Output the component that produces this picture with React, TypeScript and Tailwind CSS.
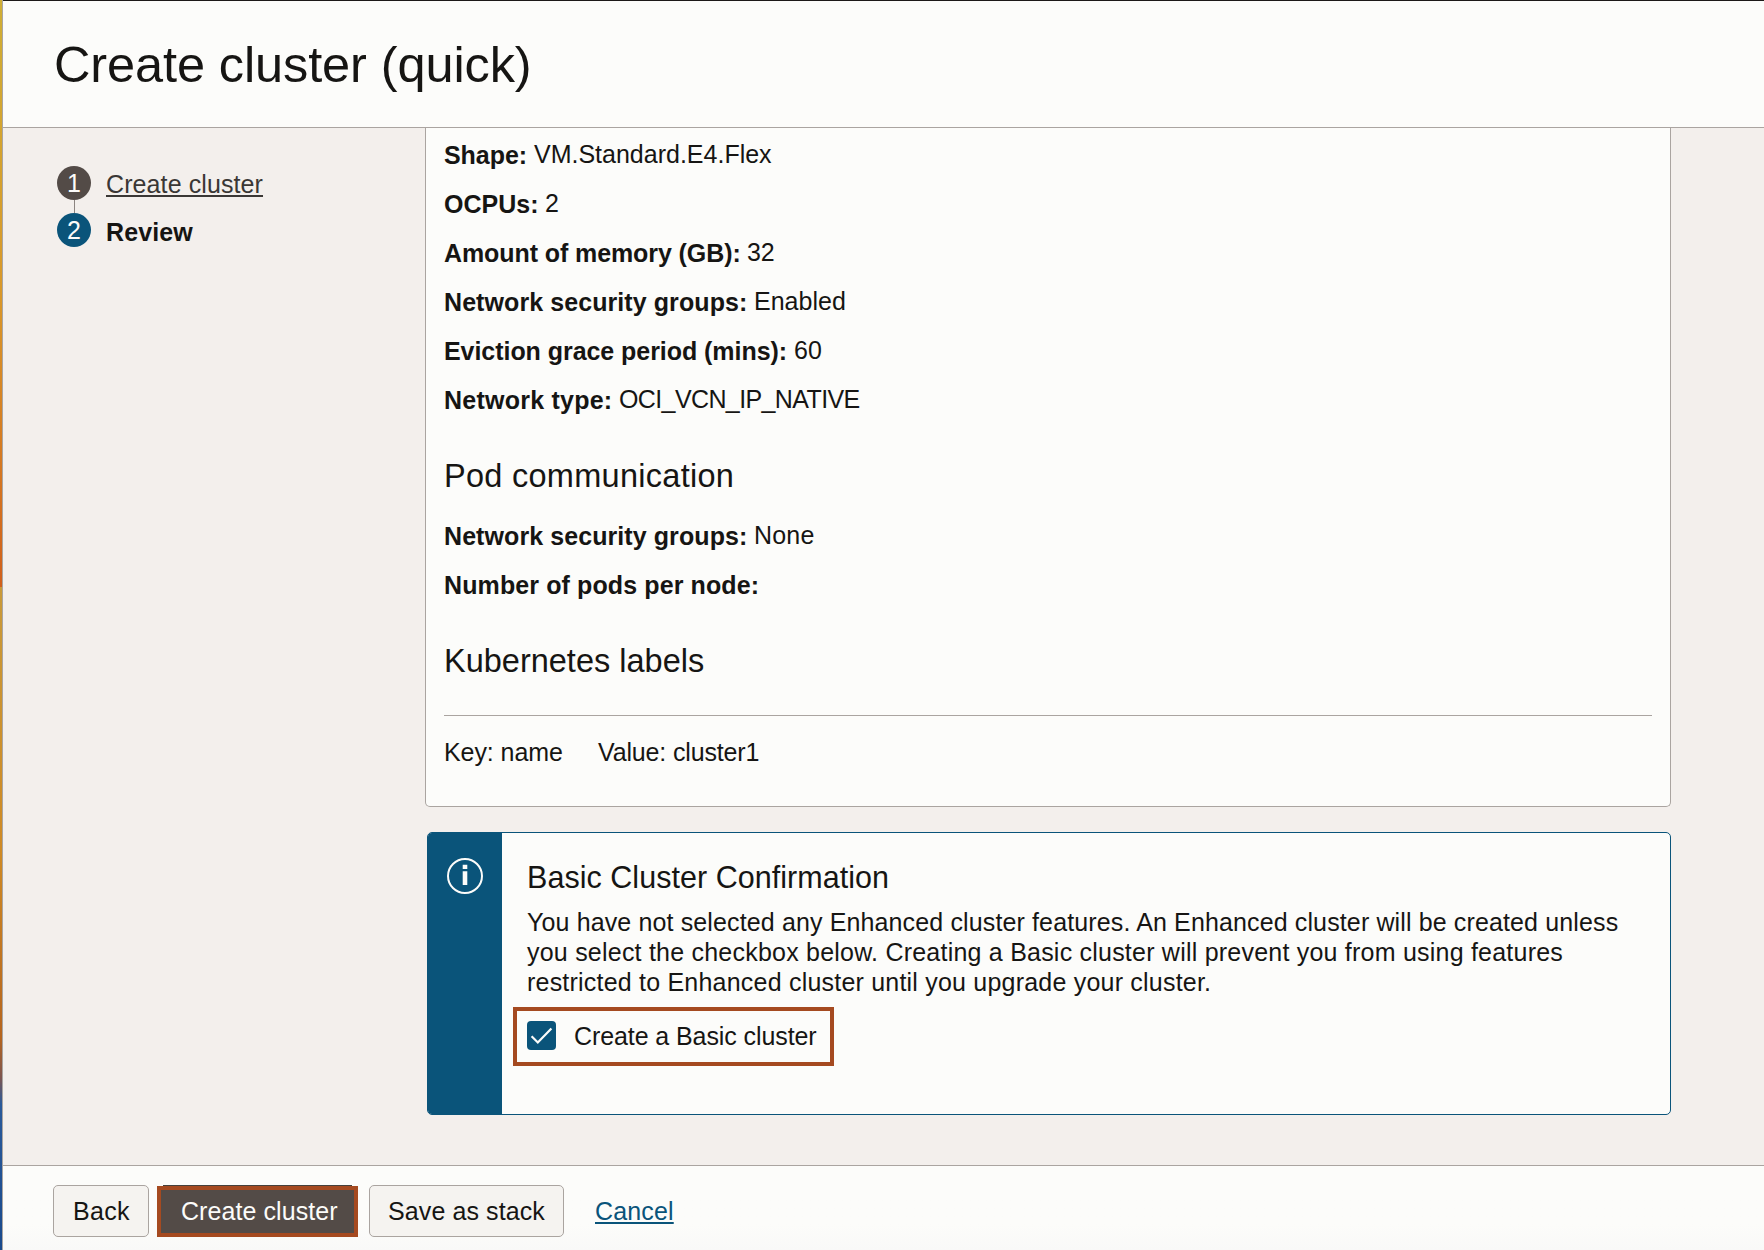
type Field = { label: string; value: string; labelClass: string; valueClass?: string };

const nodeFields: Field[] = [
  { label: "Shape:", value: "VM.Standard.E4.Flex", labelClass: "w-[90px] tracking-[-0.05px]", valueClass: "tracking-[0px]" },
  { label: "OCPUs:", value: "2", labelClass: "w-[101px]" },
  { label: "Amount of memory (GB):", value: "32", labelClass: "w-[303px] tracking-[-0.09px]", valueClass: "tracking-[-0.1px]" },
  { label: "Network security groups:", value: "Enabled", labelClass: "w-[310px] tracking-[0.08px]", valueClass: "tracking-[0.02px]" },
  { label: "Eviction grace period (mins):", value: "60", labelClass: "w-[350px] tracking-[-0.05px]" },
  { label: "Network type:", value: "OCI_VCN_IP_NATIVE", labelClass: "w-[175px] tracking-[0.24px]", valueClass: "tracking-[-0.61px]" },
];

const podFields: Field[] = [
  { label: "Network security groups:", value: "None", labelClass: "w-[310px] tracking-[0.08px]", valueClass: "tracking-[0.2px]" },
  { label: "Number of pods per node:", value: "", labelClass: "w-[330px] tracking-[0.11px]" },
];

function FieldList({ fields }: { fields: Field[] }) {
  return (
    <div className="flex flex-col gap-[19px]">
      {fields.map((f) => (
        <div key={f.label} className="flex h-[30px] whitespace-nowrap">
          <strong className={`shrink-0 font-bold ${f.labelClass}`}>{f.label}</strong>
          <span className={`-mt-px ${f.valueClass ?? ""}`}>{f.value}</span>
        </div>
      ))}
    </div>
  );
}

function Steps() {
  return (
    <nav className="w-[422px] shrink-0 pl-[54px] pt-[38px]">
      <div className="flex h-[34px]">
        <span className="flex h-[34px] w-[34px] items-center justify-center rounded-full bg-[#534b47] text-[#fcfcfa]">1</span>
        <a className="ml-[15px] mt-[3px] whitespace-nowrap tracking-[0.1px] text-[#3a3735] underline decoration-[2px] underline-offset-[2px]">
          Create cluster
        </a>
      </div>
      <div className="ml-[17px] h-[13px] w-px bg-[#8b8480]" />
      <div className="flex h-[34px]">
        <span className="flex h-[34px] w-[34px] items-center justify-center rounded-full bg-[#0a547a] text-[#fcfcfa]">2</span>
        <strong className="ml-[15px] mt-[4px] font-bold tracking-[0.1px]">Review</strong>
      </div>
    </nav>
  );
}

function InfoIcon() {
  return (
    <svg width="36" height="36" viewBox="0 0 36 36" fill="none">
      <circle cx="18" cy="18" r="17" stroke="#fcfcfa" strokeWidth="2" />
      <path fill="#fcfcfa" d="M15.7 6.8h4.6v4.2h-4.6zM15.7 13.2h4.6V27h-4.6z" />
    </svg>
  );
}

function Confirmation() {
  return (
    <section className="ml-[2px] mt-[25px] flex h-[283px] overflow-hidden rounded-[5px] border border-[#0a547a] bg-[#fcfcfa]">
      <div className="w-[74px] shrink-0 bg-[#0a547a] pl-[19px] pt-[25px]">
        <InfoIcon />
      </div>
      <div className="pl-[25px] pt-[26px] whitespace-nowrap">
        <h3 className="text-[30.5px] leading-[36px] tracking-[0.04px]">Basic Cluster Confirmation</h3>
        <p className="mt-[12px]">
          <span className="block tracking-[0.13px]">
            You have not selected any Enhanced cluster features. An Enhanced cluster will be created unless
          </span>
          <span className="block tracking-[0.22px]">
            you select the checkbox below. Creating a Basic cluster will prevent you from using features
          </span>
          <span className="block tracking-[0.21px]">restricted to Enhanced cluster until you upgrade your cluster.</span>
        </p>
        <label className="-ml-[14px] mt-[10px] flex h-[59px] w-[321px] border-4 border-[#a54a20] pl-[10px] pt-[10px]">
          <span className="h-[29px] w-[29px] shrink-0 rounded-[4px] bg-[#0a547a]">
            <svg width="29" height="29" viewBox="0 0 29 29" fill="none">
              <path d="M4.6 15.2l6.2 6.3L24.4 7.6" stroke="#fcfcfa" strokeWidth="2.2" />
            </svg>
          </span>
          <span className="ml-[18px] tracking-[-0.09px]">Create a Basic cluster</span>
        </label>
      </div>
    </section>
  );
}

export default function App() {
  return (
    <div className="flex h-[1250px] w-[1764px] overflow-hidden bg-[#fcfcfa] font-['Liberation_Sans',Arial,sans-serif] text-[25px] leading-[30px] text-[#161513]">
      <div className="flex w-[2px] shrink-0 flex-col">
        <div className="h-[587px] bg-linear-to-b from-[#cfae35] via-[#d9982a] to-[#d0601c]" />
        <div className="h-[663px] bg-[linear-gradient(to_bottom,#c99a3a_0%,#cf8a25_40%,#b5651f_68%,#7d5550_74%,#2a5a9a_78%,#1a4a8c_100%)]" />
      </div>
      <div className="w-px shrink-0 bg-[#a9a5a2]" />
      <div className="flex min-w-0 grow flex-col">
        <header className="h-[128px] shrink-0 border-b border-t border-b-[#aaa4a0] border-t-[#1c1918] pl-[51px] pt-[34px]">
          <h1 className="text-[50.5px] leading-[60px] tracking-[-0.11px]">Create cluster (quick)</h1>
        </header>
        <main className="flex h-[1037px] shrink-0 bg-[#f3efec]">
          <Steps />
          <div className="w-[1246px]">
            <section className="h-[679px] rounded-b-[5px] border border-t-0 border-[#aaa4a0] bg-[#fcfcfa] px-[18px] pt-[12px]">
              <FieldList fields={nodeFields} />
              <h2 className="mb-[25px] mt-[41px] text-[32.5px] leading-[40px] tracking-[0.28px]">Pod communication</h2>
              <FieldList fields={podFields} />
              <h2 className="mt-[41px] text-[32.5px] leading-[40px] tracking-[0px]">Kubernetes labels</h2>
              <div className="mt-[34px] h-px bg-[#aaa4a0]" />
              <div className="mt-[21px] flex whitespace-nowrap">
                <span className="w-[154px] tracking-[-0.07px]">Key: name</span>
                <span className="tracking-[-0.15px]">Value: cluster1</span>
              </div>
            </section>
            <Confirmation />
          </div>
        </main>
        <footer className="flex h-[85px] shrink-0 border-t border-[#aaa4a0] bg-linear-to-b from-[#fcfcfa] from-70% to-[#f9f9f8] pl-[50px] pt-[19px] whitespace-nowrap">
          <button className="flex h-[52px] w-[96px] rounded-[5px] border border-[#aaa4a0] bg-[#f5f3f0] pl-[19px] pt-[10px] tracking-[0.3px]">
            Back
          </button>
          <div className="ml-[8px] h-[52px] w-[201px]">
            <div className="mx-[6px] h-px bg-[#45403c]" />
            <button className="flex h-[51px] w-[201px] border-4 border-[#a54a20] bg-[#534b47] pl-[20px] pt-[6px] tracking-[0.07px] text-[#fcfcfa]">
              Create cluster
            </button>
          </div>
          <button className="ml-[11px] flex h-[52px] w-[195px] rounded-[5px] border border-[#aaa4a0] bg-[#f5f3f0] pl-[18px] pt-[10px] tracking-[0.1px]">
            Save as stack
          </button>
          <a className="ml-[31px] mt-[11px] h-[30px] tracking-[0.15px] text-[#0a547a] underline decoration-[2px] underline-offset-[2px]">
            Cancel
          </a>
        </footer>
      </div>
    </div>
  );
}
